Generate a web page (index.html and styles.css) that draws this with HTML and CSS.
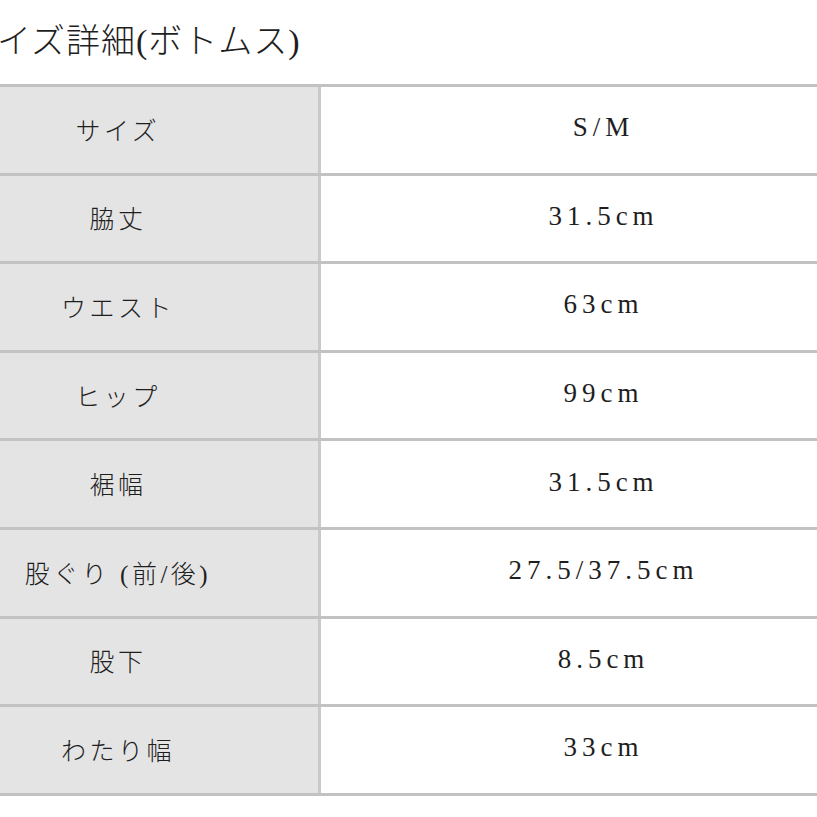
FILE: index.html
```html
<!DOCTYPE html>
<html lang="ja">
<head>
<meta charset="utf-8">
<link rel="stylesheet" href="styles.css">
</head>
<body>
<div class="page">
  <h1 class="title">サイズ詳細(ボトムス)</h1>
  <div class="table">
    <div class="row"><div class="label">サイズ</div><div class="value">S/M</div></div>
    <div class="row"><div class="label">脇丈</div><div class="value">31.5cm</div></div>
    <div class="row"><div class="label">ウエスト</div><div class="value">63cm</div></div>
    <div class="row"><div class="label">ヒップ</div><div class="value">99cm</div></div>
    <div class="row"><div class="label">裾幅</div><div class="value">31.5cm</div></div>
    <div class="row"><div class="label">股ぐり (前/後)</div><div class="value">27.5/37.5cm</div></div>
    <div class="row"><div class="label">股下</div><div class="value">8.5cm</div></div>
    <div class="row"><div class="label">わたり幅</div><div class="value">33cm</div></div>
  </div>
</div>
</body>
</html>
```

FILE: styles.css
```css
html, body {
  margin: 0;
  padding: 0;
  background: #ffffff;
  overflow: hidden;
}
.page {
  width: 817px;
  height: 817px;
  overflow: hidden;
  color: #1e1e1e;
  font-family: "Liberation Serif", "Noto Sans CJK JP", serif;
}
.title {
  margin: 0 0 0 -38px;
  height: 84px;
  box-sizing: border-box;
  padding-top: 22px;
  font-size: 34px;
  line-height: 40px;
  font-weight: 300;
  white-space: nowrap;
  letter-spacing: 1px;
}
.table {
  margin-left: -82px;
  width: 968px;
  border-top: 3px solid #c2c2c2;
}
.row {
  display: grid;
  grid-template-columns: 400px 3px 1fr;
  height: 88.6px;
  box-sizing: border-box;
  border-bottom: 3px solid #c2c2c2;
}
.label {
  grid-column: 1;
  background: #e4e4e4;
  display: flex;
  align-items: center;
  justify-content: center;
  font-size: 25px;
  font-weight: 300;
  letter-spacing: 3.5px;
  white-space: nowrap;
  padding-bottom: 2px;
}
.value {
  grid-column: 3;
  border-left: 3px solid #c9c9c9;
  margin-left: -3px;
  display: flex;
  align-items: center;
  justify-content: center;
  font-size: 27px;
  letter-spacing: 5px;
  white-space: nowrap;
  padding-bottom: 4px;
}
```
